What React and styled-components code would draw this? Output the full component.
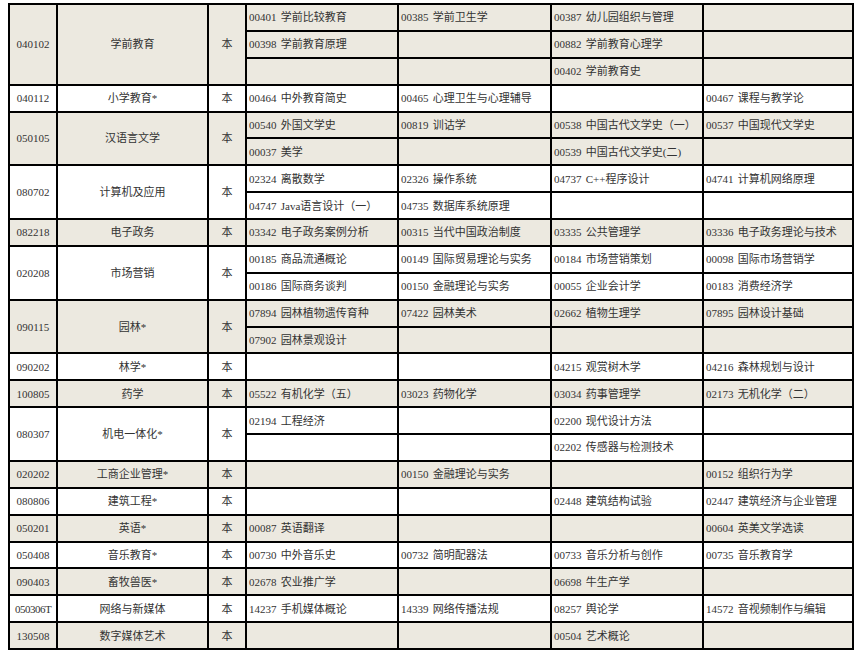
import React from "react";
import styled, { createGlobalStyle } from "styled-components";

const GlobalStyle = createGlobalStyle`
  html, body { margin: 0; padding: 0; background: #ffffff; }
  body {
    font-family: "Liberation Serif", "Noto Sans CJK SC", serif;
    color: #333333;
  }
`;

const Page = styled.div`
  padding: 3px 0 0 8px;
`;

const Table = styled.div`
  display: grid;
  grid-template-columns: 46px 149px 36px 150px 151px 150px 148px;
  grid-template-rows: repeat(24, 1fr);
  gap: 2px;
  padding: 2px;
  width: 846px;
  height: 647px;
  box-sizing: border-box;
  background: #000000;
`;

const Cell = styled.div`
  background: ${(p) => (p.$shaded ? "#ECE9E0" : "#FFFFFF")};
  grid-row: span ${(p) => p.$span || 1};
  display: flex;
  align-items: center;
  justify-content: ${(p) => (p.$center ? "center" : "flex-start")};
  padding: 1px 0 0 ${(p) => (p.$center ? "0" : "2px")};
  font-size: 11px;
  line-height: 13px;
  white-space: nowrap;
  overflow: hidden;
  word-spacing: 1.5px;
  letter-spacing: ${(p) => (p.$tight ? "-0.5px" : "0")};
`;

const groups = [
  ["040102", "学前教育", [
    ["00401 学前比较教育", "00385 学前卫生学", "00387 幼儿园组织与管理", ""],
    ["00398 学前教育原理", "", "00882 学前教育心理学", ""],
    ["", "", "00402 学前教育史", ""],
  ]],
  ["040112", "小学教育*", [
    ["00464 中外教育简史", "00465 心理卫生与心理辅导", "", "00467 课程与教学论"],
  ]],
  ["050105", "汉语言文学", [
    ["00540 外国文学史", "00819 训诂学", "00538 中国古代文学史（一）", "00537 中国现代文学史"],
    ["00037 美学", "", "00539 中国古代文学史(二)", ""],
  ]],
  ["080702", "计算机及应用", [
    ["02324 离散数学", "02326 操作系统", "04737 C++程序设计", "04741 计算机网络原理"],
    ["04747 Java语言设计（一）", "04735 数据库系统原理", "", ""],
  ]],
  ["082218", "电子政务", [
    ["03342 电子政务案例分析", "00315 当代中国政治制度", "03335 公共管理学", "03336 电子政务理论与技术"],
  ]],
  ["020208", "市场营销", [
    ["00185 商品流通概论", "00149 国际贸易理论与实务", "00184 市场营销策划", "00098 国际市场营销学"],
    ["00186 国际商务谈判", "00150 金融理论与实务", "00055 企业会计学", "00183 消费经济学"],
  ]],
  ["090115", "园林*", [
    ["07894 园林植物遗传育种", "07422 园林美术", "02662 植物生理学", "07895 园林设计基础"],
    ["07902 园林景观设计", "", "", ""],
  ]],
  ["090202", "林学*", [
    ["", "", "04215 观赏树木学", "04216 森林规划与设计"],
  ]],
  ["100805", "药学", [
    ["05522 有机化学（五）", "03023 药物化学", "03034 药事管理学", "02173 无机化学（二）"],
  ]],
  ["080307", "机电一体化*", [
    ["02194 工程经济", "", "02200 现代设计方法", ""],
    ["", "", "02202 传感器与检测技术", ""],
  ]],
  ["020202", "工商企业管理*", [
    ["", "00150 金融理论与实务", "", "00152 组织行为学"],
  ]],
  ["080806", "建筑工程*", [
    ["", "", "02448 建筑结构试验", "02447 建筑经济与企业管理"],
  ]],
  ["050201", "英语*", [
    ["00087 英语翻译", "", "", "00604 英美文学选读"],
  ]],
  ["050408", "音乐教育*", [
    ["00730 中外音乐史", "00732 简明配器法", "00733 音乐分析与创作", "00735 音乐教育学"],
  ]],
  ["090403", "畜牧兽医*", [
    ["02678 农业推广学", "", "06698 牛生产学", ""],
  ]],
  ["050306T", "网络与新媒体", [
    ["14237 手机媒体概论", "14339 网络传播法规", "08257 舆论学", "14572 音视频制作与编辑"],
  ]],
  ["130508", "数字媒体艺术", [
    ["", "", "00504 艺术概论", ""],
  ]],
];

export default function App() {
  return (
    <>
      <GlobalStyle />
      <Page>
        <Table>
          {groups.map(([code, name, rows], gi) => {
            const shaded = gi % 2 === 0;
            const span = rows.length;
            return (
              <React.Fragment key={code}>
                <Cell $shaded={shaded} $span={span} $center $tight={code.length > 6}>
                  {code}
                </Cell>
                <Cell $shaded={shaded} $span={span} $center>
                  {name}
                </Cell>
                <Cell $shaded={shaded} $span={span} $center>
                  本
                </Cell>
                {rows.map((row, ri) =>
                  row.map((course, ci) => (
                    <Cell key={`${ri}-${ci}`} $shaded={shaded}>
                      {course}
                    </Cell>
                  ))
                )}
              </React.Fragment>
            );
          })}
        </Table>
      </Page>
    </>
  );
}
